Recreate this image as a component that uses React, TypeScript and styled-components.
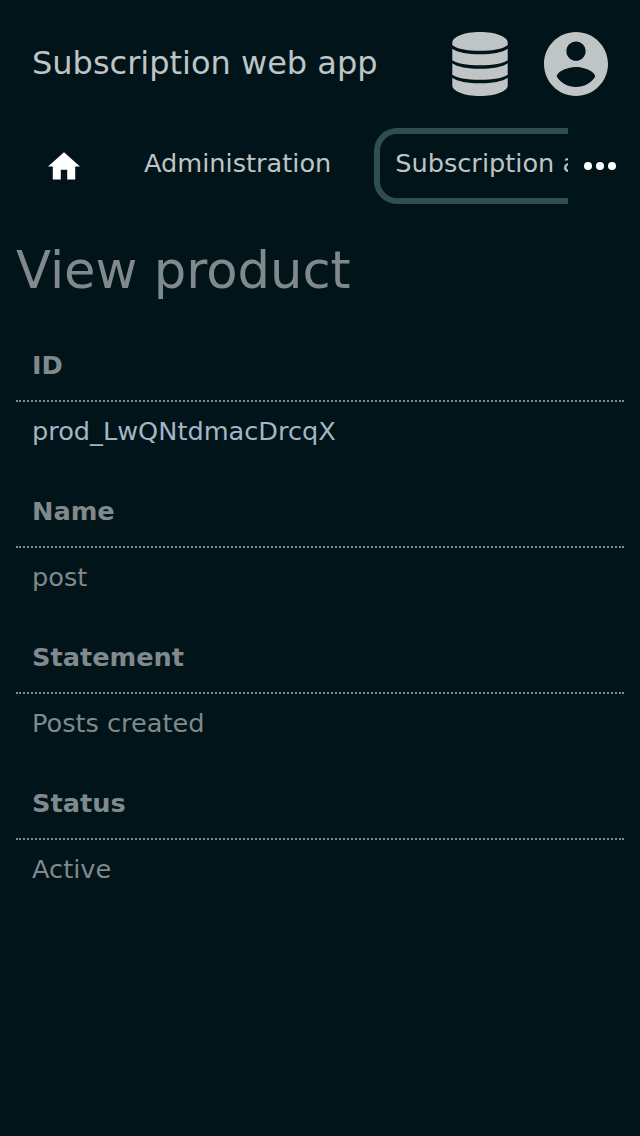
import React from "react";
import styled, { createGlobalStyle } from "styled-components";

const GlobalStyle = createGlobalStyle`
  * { box-sizing: border-box; }
  body {
    margin: 0;
    background: #001419;
    color: #80898b;
    font-family: "DejaVu Sans", sans-serif;
    font-size: 25.6px;
  }
`;

const Page = styled.div`
  min-height: 1136px;
`;

const Header = styled.header`
  display: flex;
  align-items: center;
  height: 128px;
  padding: 0 32px;
  color: #bfc4c5;
`;

const AppName = styled.div`
  flex: 1;
  font-size: 32px;
  line-height: 38px;
  white-space: nowrap;
  padding-bottom: 2px;
`;

const HeaderIcon = styled.svg`
  display: block;
  width: 64px;
  height: 64px;
  margin-left: 32px;
  fill: currentColor;
`;

const Nav = styled.nav`
  display: flex;
  height: 77px;
`;

const HomeLink = styled.a`
  display: flex;
  align-items: flex-start;
  justify-content: center;
  width: 128px;
  padding-top: 19px;
`;

const HomeIcon = styled.svg`
  display: block;
  width: 40px;
  height: 40px;
  fill: #fff;
`;

const TabList = styled.div`
  display: flex;
  flex: 1;
  min-width: 0;
  overflow: hidden;
  gap: 20.4px;
`;

const Tab = styled.a<{ $active?: boolean }>`
  flex: none;
  height: 76px;
  padding: 12.8px ${(p) => (p.$active ? "15.2px" : "16px")};
  ${(p) => !p.$active && "padding-top: 19.2px; padding-right: 22.4px;"}
  border: ${(p) => (p.$active ? "6.4px solid #2f4f4f" : "none")};
  border-radius: 23px;
  color: #bfc4c5;
  line-height: 32px;
  white-space: nowrap;
`;

const MoreButton = styled.button`
  display: flex;
  align-items: flex-start;
  width: 72px;
  padding: 34px 16px 0;
  border: 0;
  background: none;
`;

const MoreIcon = styled.svg`
  display: block;
  flex: none;
  width: 32px;
  height: 8px;
  fill: #fff;
`;

const Main = styled.main`
  padding: 35px 16px 0;
`;

const Title = styled.h1`
  margin: 0 0 31px;
  font-size: 51.2px;
  font-weight: 400;
  line-height: 60px;
`;

const Details = styled.dl`
  margin: 0;
`;

const Field = styled.div`
  height: 146px;
`;

const Term = styled.dt`
  height: 71px;
  padding: 18px 16px 0;
  border-bottom: 2px dotted #80898b;
  font-weight: 700;
  line-height: 32px;
`;

const Value = styled.dd<{ $link?: boolean }>`
  margin: 0;
  padding: 13px 16px 0;
  line-height: 32px;
  color: ${(p) => (p.$link ? "#a6b4c3" : "inherit")};
`;

const fields = [
  { label: "ID", value: "prod_LwQNtdmacDrcqX", link: true },
  { label: "Name", value: "post" },
  { label: "Statement", value: "Posts created" },
  { label: "Status", value: "Active" },
];

const bandPath = (y: number) =>
  `M4.3 ${y}C9 ${y + 3.6} 20 ${y + 5.6} 32 ${y + 5.6}S55 ${y + 3.6} 59.7 ${y}V${y + 11.5}C56 ${y + 14.6} 45 ${y + 16.5} 32 ${y + 16.5}S8 ${y + 14.6} 4.3 ${y + 11.5}Z`;

export default function App() {
  return (
    <Page>
      <GlobalStyle />
      <Header>
        <AppName>Subscription web app</AppName>
        <HeaderIcon viewBox="0 0 64 64">
          <path d="M4.3 10.5C4.3 5 16 0 32 0S59.7 5 59.7 10.5V13C56 16.7 45 18.8 32 18.8S8 16.7 4.3 13Z" />
          <path d={bandPath(16.7)} />
          <path d={bandPath(31.2)} />
          <path d="M4.3 45.7C9 49.3 20 51.3 32 51.3S55 49.3 59.7 45.7V53.5C59.7 59 48 64 32 64S4.3 59 4.3 53.5Z" />
        </HeaderIcon>
        <HeaderIcon viewBox="2 2 20 20">
          <path d="M12 2C6.48 2 2 6.48 2 12s4.48 10 10 10 10-4.48 10-10S17.52 2 12 2zm0 3c1.66 0 3 1.34 3 3s-1.34 3-3 3-3-1.34-3-3 1.34-3 3-3zm0 14.2c-2.5 0-4.71-1.28-6-3.22.03-1.99 4-3.08 6-3.08 1.99 0 5.97 1.09 6 3.08-1.29 1.94-3.5 3.22-6 3.22z" />
        </HeaderIcon>
      </Header>
      <Nav>
        <HomeLink>
          <HomeIcon viewBox="-0.5 -0.25 25 25">
            <path d="M10 20v-6h4v6h5v-8h3L12 3 2 12h3v8z" />
          </HomeIcon>
        </HomeLink>
        <TabList>
          <Tab>Administration</Tab>
          <Tab $active>Subscription administration</Tab>
        </TabList>
        <MoreButton aria-label="More">
          <MoreIcon viewBox="0 0 16 4">
            <circle cx="2" cy="2" r="2" />
            <circle cx="8" cy="2" r="2" />
            <circle cx="14" cy="2" r="2" />
          </MoreIcon>
        </MoreButton>
      </Nav>
      <Main>
        <Title>View product</Title>
        <Details>
          {fields.map((f) => (
            <Field key={f.label}>
              <Term>{f.label}</Term>
              <Value $link={f.link}>{f.value}</Value>
            </Field>
          ))}
        </Details>
      </Main>
    </Page>
  );
}
